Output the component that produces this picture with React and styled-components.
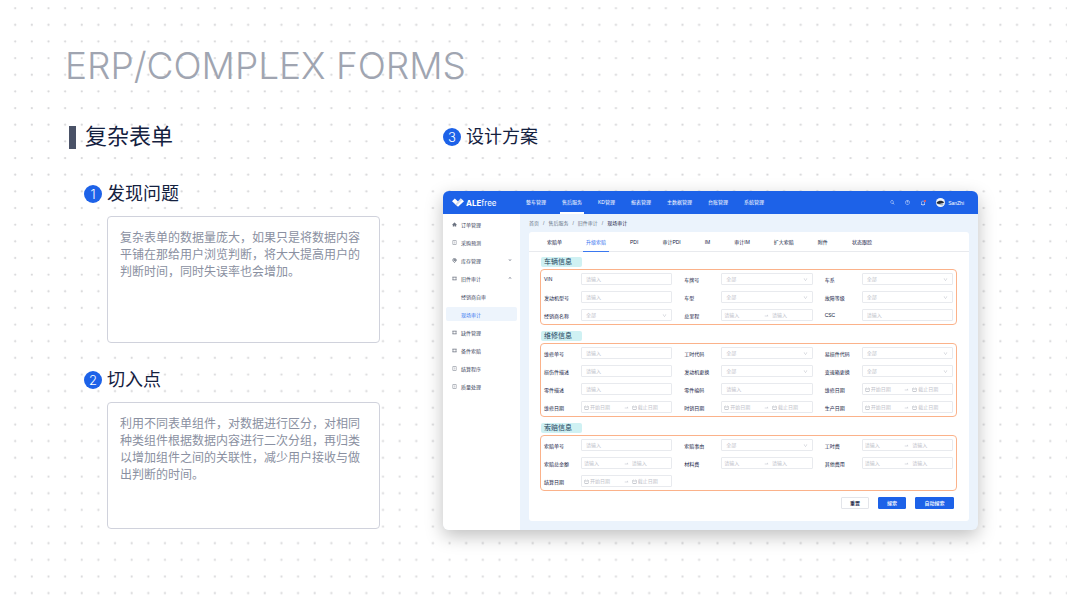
import React, { useId, useState } from 'react';
import styled, { createGlobalStyle } from 'styled-components';
import {
  AiFillHome,
  AiOutlineBell,
  AiOutlineCalendar,
  AiOutlineDown,
  AiOutlineProfile,
  AiOutlineQuestionCircle,
  AiOutlineSearch,
  AiOutlineSwapRight,
  AiOutlineTable,
  AiOutlineUp,
} from 'react-icons/ai';
import { MapPin } from 'lucide-react';

const GlobalStyle = createGlobalStyle`
  * {
    box-sizing: border-box;
  }

  body {
    margin: 0;
    background: #fff;
    font-family: "Liberation Sans", "Noto Sans CJK SC", sans-serif;
    color: #14213f;
  }

  h1, h2, h3, h4, p, ul {
    margin: 0;
    padding: 0;
    font-weight: 400;
  }

  button, input, select {
    font-family: inherit;
  }
`;

const Page = styled.main`
  position: relative;
  min-height: 100vh;
  padding: 40px 89px 71px 65px;
`;

const DotLayer = styled.svg`
  position: absolute;
  inset: 0;
  width: 100%;
  height: 100%;
  z-index: -1;
`;

const PageTitle = styled.h1`
  font-family: Inter, "Liberation Sans", sans-serif;
  font-size: 37px;
  font-weight: 300;
  line-height: 52px;
  color: #a0a5b1;
  white-space: nowrap;
`;

const Columns = styled.div`
  display: grid;
  grid-template-columns: minmax(0, 315fr) minmax(0, 535fr);
  column-gap: 63px;
  margin-top: 30px;
`;

const Heading = styled.h2`
  display: flex;
  align-items: center;
  gap: 9px;
  height: 30px;
  padding-left: 4px;
  font-size: 22px;
  line-height: 30px;

  &::before {
    content: "";
    width: 7px;
    height: 23px;
    background: #4a5267;
  }
`;

const StepTitle = styled.h3`
  display: flex;
  align-items: center;
  gap: 5px;
  height: 30px;
  font-size: 18px;
  line-height: 30px;
`;

const StepNumber = styled.span`
  width: 18px;
  height: 18px;
  border-radius: 50%;
  background: #1d62e8;
  color: #fff;
  font-family: Inter, sans-serif;
  font-size: 13px;
  font-weight: 300;
  line-height: 18px;
  text-align: center;
`;

const Step = styled.section`
  margin-top: ${({ first }) => (first ? '27px' : '22px')};
  padding-left: 19px;
`;

const Note = styled.p`
  min-height: 127px;
  margin: 7px 0 0 23px;
  padding: 13px 12px;
  border: 1px solid #d0d2dc;
  border-radius: 4px;
  background: #fff;
  color: #8a90a1;
  font-size: 12px;
  line-height: 17px;
`;

const AppWindow = styled.div`
  margin-top: 39px;
  overflow: hidden;
  border-radius: 6px;
  background: #ebf3fc;
  box-shadow: 0 6px 18px rgba(0, 0, 0, 0.25);
  font-size: 5px;
`;

const TopBar = styled.header`
  display: flex;
  align-items: center;
  height: 23px;
  padding: 0 14px 0 9px;
  background: #1d62e8;
  color: #fff;
`;

const Brand = styled.div`
  display: flex;
  align-items: center;
  gap: 2px;
  width: 74px;
  font-family: Inter, sans-serif;
  font-size: 8px;
`;

const MainNav = styled.nav`
  display: flex;
  gap: 16px;
  height: 100%;
`;

const NavLink = styled.a`
  position: relative;
  color: #fff;
  line-height: 23px;
  text-decoration: none;
  white-space: nowrap;

  &::after {
    content: "";
    display: ${({ active }) => (active ? 'block' : 'none')};
    position: absolute;
    left: -2px;
    right: -2px;
    bottom: 0;
    height: 2px;
    background: #fff;
  }
`;

const Tools = styled.div`
  display: flex;
  align-items: center;
  gap: 10px;
  margin-left: auto;
`;

const ToolButton = styled.button`
  position: relative;
  display: flex;
  padding: 0;
  border: 0;
  background: none;
  color: #fff;
`;

const AlertDot = styled.span`
  position: absolute;
  top: 0;
  right: 0;
  width: 2px;
  height: 2px;
  border-radius: 50%;
  background: #ff5a4f;
`;

const User = styled.span`
  display: flex;
  align-items: center;
  gap: 3px;
`;

const Body = styled.div`
  display: flex;
`;

const Sidebar = styled.ul`
  display: flex;
  flex-direction: column;
  flex-shrink: 0;
  gap: 4px;
  width: 77px;
  padding: 3px;
  background: #fff;
  list-style: none;
`;

const SideLink = styled.a`
  display: flex;
  align-items: center;
  height: 14px;
  padding: 0 5px 0 6px;
  border-radius: 2px;
  background: ${({ active }) => (active ? '#edf4fc' : 'transparent')};
  color: ${({ active }) => (active ? '#3a78f0' : '#3d465c')};
  text-decoration: none;
`;

const SideIcon = styled.span`
  display: flex;
  width: 9px;
  color: #6b7280;
`;

const SideArrow = styled.span`
  display: flex;
  margin-left: auto;
`;

const Content = styled.div`
  flex: 1;
  min-width: 0;
  padding: 5px 9px 9px;
`;

const Breadcrumb = styled.nav`
  display: flex;
  gap: 4px;
  height: 8px;
  color: #6a7386;
  line-height: 8px;

  strong {
    color: #14213f;
    font-weight: 400;
  }
`;

const Panel = styled.div`
  margin-top: 5px;
  padding-bottom: 12px;
  border-radius: 3px;
  background: #fff;
`;

const TabBar = styled.div`
  display: flex;
  gap: 24px;
  height: 20px;
  padding-left: 18px;
  border-bottom: 1px solid #e8eaee;
`;

const Tab = styled.button`
  position: relative;
  padding: 2px 0 0;
  border: 0;
  background: none;
  color: ${({ active }) => (active ? '#3a78f0' : '#14213f')};
  font-size: 5px;
  line-height: 17px;
  white-space: nowrap;

  &::after {
    content: "";
    display: ${({ active }) => (active ? 'block' : 'none')};
    position: absolute;
    left: -3px;
    right: -3px;
    bottom: -1px;
    height: 1px;
    background: #3a78f0;
  }
`;

const Form = styled.form`
  padding: 5px 12px 0 11px;
`;

const Group = styled.section`
  margin-bottom: 6px;
`;

const GroupTitle = styled.h4`
  width: 41px;
  height: 10px;
  margin-left: 1px;
  padding-left: 3px;
  border-radius: 2px;
  background: #cff1f3;
  color: #24435c;
  font-size: 7px;
  line-height: 10px;
`;

const GroupBox = styled.div`
  display: grid;
  grid-template-columns: repeat(3, minmax(0, 1fr));
  gap: 6px 12px;
  margin-top: 2px;
  padding: 3px;
  border: 1px solid #fbb28a;
  border-radius: 4px;
`;

const Field = styled.div`
  display: flex;
  align-items: center;
  height: 12px;
`;

const FieldLabel = styled.label`
  width: 37px;
  color: #14213f;
  white-space: nowrap;
`;

const Control = styled.div`
  position: relative;
  display: flex;
  flex: 1;
  align-items: center;
  min-width: 0;
  height: 12px;
  padding-left: ${({ range }) => (range ? '2px' : '4px')};
  border: 1px solid #e8eaee;
  border-radius: 1px;
  background: #fff;
  color: #b9bdc6;
`;

const TextInput = styled.input`
  flex: 1;
  width: 0;
  min-width: 0;
  height: 10px;
  padding: 0;
  border: 0;
  outline: 0;
  background: none;
  color: #14213f;
  font-size: 5px;

  &::placeholder {
    color: #bfc3cb;
    opacity: 1;
  }
`;

const Select = styled.select`
  width: 100%;
  height: 10px;
  padding: 0;
  border: 0;
  outline: 0;
  appearance: none;
  background: none;
  color: #bfc3cb;
  font-size: 5px;
`;

const SelectArrow = styled.span`
  position: absolute;
  right: 4px;
  display: flex;
  pointer-events: none;
`;

const RangePart = styled.span`
  display: flex;
  align-items: center;
  gap: 1px;
  width: 40px;
  color: #9297a3;
`;

const RangeArrow = styled.span`
  display: flex;
  width: 8px;
`;

const Actions = styled.div`
  display: flex;
  justify-content: flex-end;
  gap: 9px;
  margin: 4px 3px 0 0;
`;

const ActionButton = styled.button`
  width: ${({ wide }) => (wide ? '39px' : '28px')};
  height: 12px;
  padding: 0;
  border: 1px solid ${({ primary }) => (primary ? '#1d62e8' : '#e3e5ea')};
  border-radius: 1px;
  background: ${({ primary }) => (primary ? '#1d62e8' : '#fff')};
  color: ${({ primary }) => (primary ? '#fff' : '#14213f')};
  font-size: 5px;
  font-weight: 500;
  line-height: 10px;
`;

const navItems = ['整车管理', '售后服务', 'KD管理', '报表管理', '主数据管理', '台账管理', '系统管理'];

const sideItems = [
  { label: '订单管理', icon: <AiFillHome size={5} /> },
  { label: '采购预测', icon: <AiOutlineProfile size={5} /> },
  { label: '库存管理', icon: <MapPin size={5} strokeWidth={4} />, arrow: 'down' },
  { label: '旧件审计', icon: <AiOutlineTable size={5} />, arrow: 'up' },
  { label: '经销商自审' },
  { label: '现场审计', active: true },
  { label: '缺件管理', icon: <AiOutlineTable size={5} /> },
  { label: '备件索赔', icon: <AiOutlineTable size={5} /> },
  { label: '结算程序', icon: <AiOutlineProfile size={5} /> },
  { label: '质量处理', icon: <AiOutlineProfile size={5} /> },
];

const tabs = ['索赔单', '升级索赔', 'PDI', '审计PDI', 'IM', '审计IM', '扩大索赔', '附件', '状态跟踪'];

const groups = [
  {
    title: '车辆信息',
    fields: [
      ['VIN', 'text'], ['车牌号', 'select'], ['车系', 'select'],
      ['发动机型号', 'text'], ['车型', 'select'], ['故障等级', 'select'],
      ['经销商名称', 'select'], ['总里程', 'range'], ['CSC', 'text'],
    ],
  },
  {
    title: '维修信息',
    fields: [
      ['维修单号', 'text'], ['工时代码', 'select'], ['易损件代码', 'select'],
      ['损伤件描述', 'text'], ['发动机更换', 'select'], ['变速箱更换', 'select'],
      ['零件描述', 'text'], ['零件编码', 'text'], ['维修日期', 'date'],
      ['维修日期', 'date'], ['时销日期', 'date'], ['生产日期', 'date'],
    ],
  },
  {
    title: '索赔信息',
    fields: [
      ['索赔单号', 'text'], ['索赔事由', 'select'], ['工时费', 'range'],
      ['索赔总金额', 'range'], ['材料费', 'range'], ['其他费用', 'range'],
      ['结算日期', 'date'],
    ],
  },
];

// The dot grid repeats in blocks, with a slightly wider gap between blocks.
const DotGrid = () => {
  const dots = [];
  for (let row = 0; row < 28; row++) {
    for (let col = 0; col < 22; col++) {
      dots.push(
        <circle key={`${row}-${col}`} cx={2 + col * 16.64} cy={2 + row * 16.65} r="1.1" />
      );
    }
  }

  return (
    <DotLayer aria-hidden="true">
      <defs>
        <pattern id="dots" x="-20.1" y="6.2" width="367.8" height="468.4" patternUnits="userSpaceOnUse">
          <g fill="#d6d6d8">{dots}</g>
        </pattern>
      </defs>
      <rect width="100%" height="100%" fill="url(#dots)" />
    </DotLayer>
  );
};

const Logo = () => (
  <svg width="12" height="9" viewBox="0 0 12 9">
    <path d="M0 3.2 2.8.4 6 3.4 8.8.4 12 3.2 6 8.8Z" fill="#fff" />
    <path d="M6 3.4 8.8.4 10.4 1.8 4.6 7.5 3.3 6.2Z" fill="#d5dcea" />
  </svg>
);

const Avatar = () => (
  <svg width="9" height="9" viewBox="0 0 9 9">
    <circle cx="4.5" cy="4.5" r="4.5" fill="#f4f7fb" />
    <path d="M.6 4.6C2 3 4 2.4 6.2 3L8.4 4.2 6.8 5.2 3 6 .8 5.6Z" fill="#252b36" />
    <path d="M1.4 6.6 6 5.8 8 5.8 6.4 7.4Z" fill="#9fb3cc" />
  </svg>
);

const FormField = ({ label, type }) => {
  const id = useId();

  if (type === 'select') {
    return (
      <Field>
        <FieldLabel htmlFor={id}>{label}</FieldLabel>
        <Control>
          <Select id={id}>
            <option>全部</option>
          </Select>
          <SelectArrow><AiOutlineDown size={5} /></SelectArrow>
        </Control>
      </Field>
    );
  }

  if (type === 'range' || type === 'date') {
    const isDate = type === 'date';
    return (
      <Field>
        <FieldLabel htmlFor={id}>{label}</FieldLabel>
        <Control range={1}>
          <RangePart>
            {isDate && <AiOutlineCalendar size={5} />}
            <TextInput id={id} placeholder={isDate ? '开始日期' : '请输入'} />
          </RangePart>
          <RangeArrow><AiOutlineSwapRight size={5} /></RangeArrow>
          <RangePart>
            {isDate && <AiOutlineCalendar size={5} />}
            <TextInput aria-label={label} placeholder={isDate ? '截止日期' : '请输入'} />
          </RangePart>
        </Control>
      </Field>
    );
  }

  return (
    <Field>
      <FieldLabel htmlFor={id}>{label}</FieldLabel>
      <Control>
        <TextInput id={id} placeholder="请输入" />
      </Control>
    </Field>
  );
};

const ClaimWindow = () => {
  const [tab, setTab] = useState('升级索赔');

  return (
    <AppWindow>
      <TopBar>
        <Brand>
          <Logo />
          <span><b>ALE</b>free</span>
        </Brand>
        <MainNav>
          {navItems.map((item) => (
            <NavLink key={item} href="#" active={item === '售后服务' ? 1 : 0}>{item}</NavLink>
          ))}
        </MainNav>
        <Tools>
          <ToolButton aria-label="搜索"><AiOutlineSearch size={5} /></ToolButton>
          <ToolButton aria-label="帮助"><AiOutlineQuestionCircle size={5} /></ToolButton>
          <ToolButton aria-label="通知"><AiOutlineBell size={6} /><AlertDot /></ToolButton>
          <User><Avatar />SanZhi</User>
        </Tools>
      </TopBar>
      <Body>
        <Sidebar>
          {sideItems.map(({ label, icon, arrow, active }) => (
            <li key={label}>
              <SideLink href="#" active={active ? 1 : 0}>
                <SideIcon>{icon}</SideIcon>
                {label}
                {arrow && (
                  <SideArrow>
                    {arrow === 'up' ? <AiOutlineUp size={4} /> : <AiOutlineDown size={4} />}
                  </SideArrow>
                )}
              </SideLink>
            </li>
          ))}
        </Sidebar>
        <Content>
          <Breadcrumb>
            <span>首页</span><span>/</span>
            <span>售后服务</span><span>/</span>
            <span>旧件审计</span><span>/</span>
            <strong>现场审计</strong>
          </Breadcrumb>
          <Panel>
            <TabBar>
              {tabs.map((item) => (
                <Tab key={item} type="button" active={item === tab ? 1 : 0} onClick={() => setTab(item)}>
                  {item}
                </Tab>
              ))}
            </TabBar>
            <Form onSubmit={(e) => e.preventDefault()}>
              {groups.map(({ title, fields }) => (
                <Group key={title}>
                  <GroupTitle>{title}</GroupTitle>
                  <GroupBox>
                    {fields.map(([label, type], index) => (
                      <FormField key={index} label={label} type={type} />
                    ))}
                  </GroupBox>
                </Group>
              ))}
              <Actions>
                <ActionButton type="reset">重置</ActionButton>
                <ActionButton type="submit" primary={1}>搜索</ActionButton>
                <ActionButton type="button" primary={1} wide={1}>自动搜索</ActionButton>
              </Actions>
            </Form>
          </Panel>
        </Content>
      </Body>
    </AppWindow>
  );
};

const App = () => (
  <>
    <GlobalStyle />
    <Page>
      <DotGrid />
      <PageTitle>ERP/COMPLEX FORMS</PageTitle>
      <Columns>
        <div>
          <Heading>复杂表单</Heading>
          <Step first={1}>
            <StepTitle><StepNumber>1</StepNumber>发现问题</StepTitle>
            <Note>
              复杂表单的数据量庞大，如果只是将数据内容平铺在那给用户浏览判断，将大大提高用户的判断时间，同时失误率也会增加。
            </Note>
          </Step>
          <Step>
            <StepTitle><StepNumber>2</StepNumber>切入点</StepTitle>
            <Note>
              利用不同表单组件，对数据进行区分，对相同种类组件根据数据内容进行二次分组，再归类以增加组件之间的关联性，减少用户接收与做出判断的时间。
            </Note>
          </Step>
        </div>
        <div>
          <StepTitle><StepNumber>3</StepNumber>设计方案</StepTitle>
          <ClaimWindow />
        </div>
      </Columns>
    </Page>
  </>
);

export default App;
